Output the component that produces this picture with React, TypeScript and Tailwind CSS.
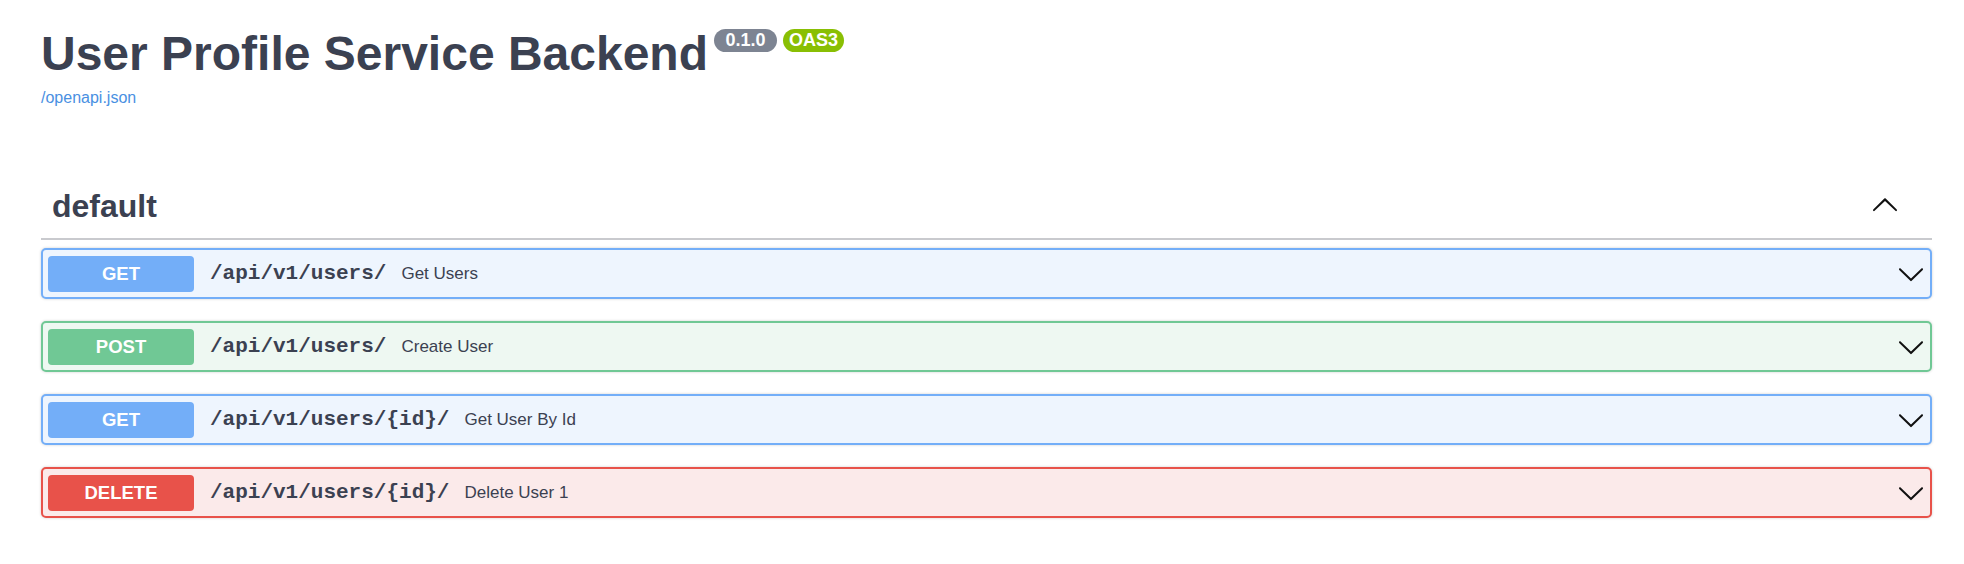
import React from "react";

const ArrowDown = () => (
  <svg width="28" height="28" viewBox="0 0 20 20" className="shrink-0">
    <path
      fill="#111"
      d="M17.418 6.109c.272-.268.709-.268.979 0s.271.701 0 .969l-7.908 7.83c-.27.268-.707.268-.979 0l-7.908-7.83c-.27-.268-.27-.701 0-.969.271-.268.709-.268.979 0L10 13.25l7.418-7.141z"
    />
  </svg>
);

const ArrowUp = () => (
  <svg width="28" height="28" viewBox="0 0 20 20" className="shrink-0 mr-[33px] mb-[5px]">
    <path
      fill="#111"
      d="M17.418 14.908c.272.268.709.268.979 0s.271-.701 0-.969l-7.908-7.83c-.27-.268-.707-.268-.979 0l-7.908 7.83c-.27.268-.27.701 0 .969.271.268.709.268.979 0L10 7.793l7.418 7.115z"
    />
  </svg>
);

type Op = {
  method: string;
  path: string;
  desc: string;
  kind: "get" | "post" | "delete";
};

const ops: Op[] = [
  { method: "GET", path: "/api/v1/users/", desc: "Get Users", kind: "get" },
  { method: "POST", path: "/api/v1/users/", desc: "Create User", kind: "post" },
  { method: "GET", path: "/api/v1/users/{id}/", desc: "Get User By Id", kind: "get" },
  { method: "DELETE", path: "/api/v1/users/{id}/", desc: "Delete User 1", kind: "delete" },
];

const blockStyles: Record<Op["kind"], { block: string; badge: string }> = {
  get: { block: "border-[#73aef8] bg-[#eef5fe]", badge: "bg-[#73aef8]" },
  post: { block: "border-[#70c895] bg-[#eef8f2]", badge: "bg-[#70c895]" },
  delete: { block: "border-[#e8524a] bg-[#fbeaea]", badge: "bg-[#e8524a]" },
};

export default function App() {
  return (
    <div className="min-h-screen bg-white pl-[41px] pr-[32px] font-['Liberation_Sans',Arial,sans-serif] text-[#3b4151]">
      <div className="pt-[26px] flex items-start">
        <h2 className="text-[48px] leading-[56px] font-bold text-[#3b4151]">
          User Profile Service Backend
        </h2>
        <div className="ml-[6px] mt-[3px] flex gap-[6px]">
          <span className="w-[63px] h-[23px] rounded-full bg-[#7d8492] text-white font-bold text-[18px] leading-[23px] text-center">
            0.1.0
          </span>
          <span className="w-[61px] h-[23px] rounded-full bg-[#89bf04] text-white font-bold text-[18px] leading-[23px] text-center">
            OAS3
          </span>
        </div>
      </div>
      <a className="block mt-[6px] text-[16px] leading-[20px] text-[#4990e2] w-fit">/openapi.json</a>

      <div className="mt-[68px] flex items-center justify-between pl-[11px] pt-[10px] pb-[12px] border-b-2 border-[#c9cace]">
        <h3 className="text-[32px] leading-[40px] font-bold text-[#3b4151]">default</h3>
        <ArrowUp />
      </div>

      <div className="mt-[8px] flex flex-col gap-[22px]">
        {ops.map((op, i) => {
          const s = blockStyles[op.kind];
          return (
            <div
              key={i}
              className={`flex items-center border-2 rounded-[5px] pl-[5px] pr-[5px] pt-[6px] pb-[5px] shadow-[0_0_3px_rgba(0,0,0,0.19)] ${s.block}`}
            >
              <div
                className={`w-[146px] h-[36px] rounded-[4px] flex items-center justify-center text-white font-bold text-[18.5px] ${s.badge}`}
              >
                {op.method}
              </div>
              <span className="ml-[16px] font-['Liberation_Mono','Courier_New',monospace] font-bold text-[21px] text-[#3b4151]">
                {op.path}
              </span>
              <span className="ml-[15px] text-[17px] text-[#3b4151]">{op.desc}</span>
              <div className="ml-auto">
                <ArrowDown />
              </div>
            </div>
          );
        })}
      </div>
    </div>
  );
}
